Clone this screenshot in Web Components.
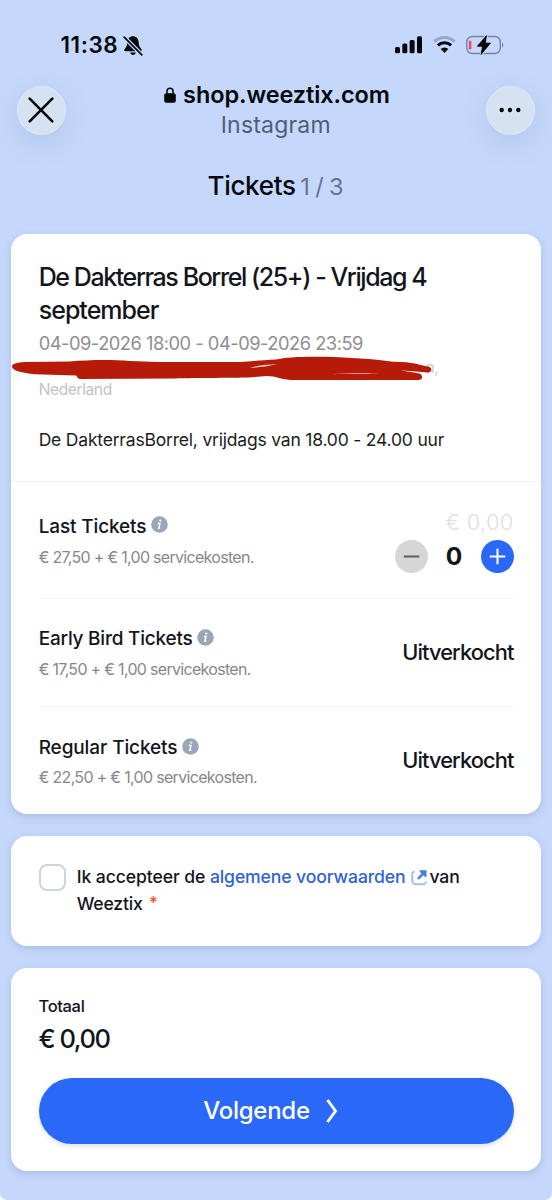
<!DOCTYPE html>
<html lang="nl">
<head>
<meta charset="utf-8">
<title>Tickets</title>
<style>
html{background:#fff}
body{margin:0;width:552px;height:1200px;overflow:hidden;font-family:Inter,"Liberation Sans",sans-serif;color:#13151c}
</style>
</head>
<body>
<ticket-shop></ticket-shop>
<script>
const define=(name,html,setup)=>{
  const tpl=document.createElement('template');
  tpl.innerHTML=html;
  customElements.define(name,class extends HTMLElement{
    connectedCallback(){
      if(this.shadowRoot)return;
      this.attachShadow({mode:'open'}).appendChild(tpl.content.cloneNode(true));
      if(setup)setup(this,this.shadowRoot);
    }
  });
};

define('text-line',`<style>:host{display:block;white-space:pre;flex:none}</style><slot></slot>`,el=>{
  for(const [a,p,u] of [['size','fontSize','px'],['lh','lineHeight','px'],['weight','fontWeight',''],['track','letterSpacing','px'],['color','color','']]){
    const v=el.getAttribute(a); if(v!==null)el.style[p]=v+u;
  }
});

define('status-bar',`<style>
:host{display:flex;align-items:center;height:70px;padding:10px 48px 0 60.500px;color:#05070c}
svg{display:block;flex:none}.sp{flex:1}
.bell{margin-left:4.500px}.wifi{margin:0 10px 0 11px}
</style>
<text-line size="22.500" weight="600" lh="30" track="0.58">11:38</text-line>
<svg class="bell" width="20" height="21" viewBox="0 0 20 21"><path d="M10 1.200c-3.300 0-5.400 2.400-5.600 5.600-.1 3.600-.9 5.200-2.700 7.200-.9 1-.4 2.300.9 2.300h14.800c1.300 0 1.800-1.300.9-2.300-1.800-2-2.600-3.600-2.700-7.200C15.400 3.600 13.300 1.200 10 1.200zM7.200 17.600h5.600c-.3 1.500-1.400 2.400-2.800 2.400s-2.500-.9-2.800-2.400z" fill="#05070c"/><path d="M2 3 18.200 19.200" stroke="#c5d8fb" stroke-width="4.200"/><path d="M1.200 2.200 18.800 19.800" stroke="#05070c" stroke-width="1.700" stroke-linecap="round"/></svg>
<span class="sp"></span>
<svg width="27" height="18" viewBox="0 0 27 18" fill="#05070c"><rect y="11" width="5" height="6.300" rx="1.500"/><rect x="7.300" y="7.600" width="5" height="9.700" rx="1.500"/><rect x="14.600" y="4" width="5" height="13.300" rx="1.500"/><rect x="22" y=".3" width="5" height="17" rx="1.500"/></svg>
<svg class="wifi" width="23" height="18" viewBox="0 0 23 18" fill="none"><path d="M1.400 5.700a14.500 14.500 0 0 1 20.200 0" stroke="#94a8cd" stroke-width="3"/><path d="M4.900 9.400a9.500 9.500 0 0 1 13.200 0" stroke="#05070c" stroke-width="3"/><path d="M11.500 17 7.700 13.100a5.500 5.500 0 0 1 7.600 0z" fill="#05070c"/></svg>
<svg width="38" height="20" viewBox="0 0 38 20"><rect x=".8" y="1.500" width="33.500" height="17" rx="5.500" fill="none" stroke="#7383a5" stroke-width="1.400"/><path d="M36 7.500c1.700.6 1.700 4.400 0 5z" fill="#7383a5"/><rect x="2.800" y="5.500" width="2.600" height="9" rx="1.200" fill="#f4495c"/><path d="M20.500.6 11.300 11.200h5.200L15 19.600l9.500-11.600h-5.200z" fill="#05070c" stroke="#c5d8fb" stroke-width="2.600" paint-order="stroke"/><path d="M20.500.6 11.300 11.200h5.200L15 19.600l9.500-11.600h-5.200z" fill="#05070c" stroke="#05070c" stroke-width=".6" stroke-linejoin="round"/></svg>`);

define('round-button',`<style>:host{display:grid;place-items:center;width:49px;height:49px;border-radius:50%;background:#d6e1f2;box-shadow:0 8px 28px rgba(70,100,160,.17),inset 0 0 1px 1px rgba(235,242,255,.35)}</style><slot></slot>`);

define('browser-nav',`<style>
:host{display:flex;justify-content:space-between;align-items:center;height:60px;padding:0 17px 0 16.500px;color:#05070c}
.site{display:flex;flex-direction:column;align-items:center}
.row{display:flex;align-items:center;gap:7.500px;margin-left:2px}svg{display:block}
</style>
<round-button><svg width="26" height="26" viewBox="0 0 26 26"><path d="M1.700 1.700 24.300 24.300M24.300 1.700 1.700 24.300" stroke="#05070c" stroke-width="2.600" stroke-linecap="round"/></svg></round-button>
<div class="site"><div class="row"><svg width="12" height="16" viewBox="0 0 12 16"><path d="M3 7V4.200a3 3 0 0 1 6 0V7" fill="none" stroke="#05070c" stroke-width="1.500"/><rect x=".2" y="6.200" width="11.600" height="9.500" rx="2" fill="#05070c"/></svg><text-line size="23.500" weight="600" lh="30" track="-0.09">shop.weeztix.com</text-line></div>
<text-line size="23" lh="30" track="0.19" color="#505d79">Instagram</text-line></div>
<round-button><svg width="22" height="6" viewBox="0 0 22 6" fill="#05070c"><circle cx="2.700" cy="3" r="2.200"/><circle cx="11" cy="3" r="2.200"/><circle cx="19.300" cy="3" r="2.200"/></svg></round-button>`);

define('step-title',`<style>:host{display:flex;justify-content:center;align-items:baseline;gap:4.500px;height:91px;line-height:91px;padding-right:1.500px;color:#05070c}</style>
<text-line size="26" weight="550" lh="91" track="-0.3">Tickets</text-line><text-line size="23.500" lh="91" track="-0.6" color="#65738e">1 / 3</text-line>`);

define('shop-card',`<style>:host{display:block;box-sizing:border-box;background:#fff;border-radius:16px;box-shadow:0 3px 9px rgba(60,85,150,.2)}</style><slot></slot>`);

define('event-info',`<style>
:host{display:block;position:relative;height:220px;padding:27.500px 27px 0 27.700px;border-bottom:1px solid #f1f2f4}
.addr{padding-left:387px}.space{height:1.500px}.gap{height:26.500px}
svg{position:absolute;left:0;top:118px;overflow:visible}
</style>
<text-line size="25" weight="540" lh="33" track="-1.42">De Dakterras Borrel (25+) - Vrijdag 4</text-line>
<text-line size="25" weight="540" lh="33" track="-0.98">september</text-line>
<div class="space"></div>
<text-line size="18.300" lh="28" track="-0.49" color="#8e8e91">04-09-2026 18:00 - 04-09-2026 23:59</text-line>
<text-line class="addr" size="15" lh="21" track="-0.2" color="#c8c8ca">n,</text-line>
<text-line size="15.500" lh="23" track="-0.37" color="#c2c2c5">Nederland</text-line>
<div class="gap"></div>
<text-line size="17.500" lh="26" track="-0.195" color="#1a1c22">De DakterrasBorrel, vrijdags van 18.00 - 24.00 uur</text-line>
<svg width="425" height="30" viewBox="11 351.500 425 30"><path d="M12 366C12 363.500 16 362 25 361.600L70 361C90 359.200 112 359 130 360.600L158 361.600 240 361.400C252 361 262 359.500 276 359 286 356.500 305 355.800 325 356.300 350 357 372 358.500 393 361.200 412 361 420 364.500 428 366 432.500 367 432.500 371.700 428 372L400 369.700 418 372.800C423.500 373.500 423.500 379.500 418 379.500H292C282 379.500 276 375.500 266 375.600 250 378 200 377 175 378L80 378.400C77 378 77.500 376 76 375L35 373.800C22 372.500 12 370 12 366Z" fill="#b51b08"/><path d="M250 367.400C258 364.500 268 364.300 278 363.600 268 366 260 367 250 367.400ZM330 373.800C350 372.200 368 372.300 380 373.100 365 373.500 350 373 330 373.800Z" fill="#f0c4ba"/></svg>`);

define('info-dot',`<style>:host{display:block}svg{display:block}</style><svg width="17" height="17" viewBox="0 0 17 17"><circle cx="8.500" cy="8.500" r="8.300" fill="#9ba7b9"/><path d="M7 7.400h1.900L7.900 12.200h1.300" fill="none" stroke="#fff" stroke-width="1.500"/><circle cx="9.300" cy="4.600" r="1.100" fill="#fff"/></svg>`);

define('ticket-row',`<style>
:host{display:flex;justify-content:space-between;box-sizing:border-box;height:108px;margin:0 27.500px 0 27.700px;padding-top:25px;border-bottom:1px solid #f5f5f6}
.name{display:flex;gap:4.500px}info-dot{margin-top:5px}
:host([first]){height:117px;padding-top:29.600px}:host([first]) info-dot{margin-top:4.400px}
:host([last]){border:0}
:host([last]) .name{padding-top:.6px;margin-bottom:-.6px}
</style><div><div class="name"><slot name="name"></slot><info-dot></info-dot></div><slot name="sub"></slot></div><slot></slot>`);

define('quantity-picker',`<style>
:host{display:flex;flex-direction:column;align-items:flex-end;margin-top:-2.600px}
.row{display:flex;align-items:center;margin-top:4px;height:33px}
svg{display:block}text-line{width:53px;text-align:center}
.p{width:auto}
</style>
<text-line class="p" size="22" weight="300" lh="27" track="0.2" color="#dfdfe1">€ 0,00</text-line>
<div class="row"><svg width="33" height="33" viewBox="0 0 33 33"><circle cx="16.500" cy="16.500" r="16.500" fill="#d6d6d6"/><path d="M8.800 16.500h15.600" stroke="#5c6066" stroke-width="2"/></svg>
<text-line size="24.500" weight="700" lh="33">0</text-line>
<svg width="33" height="33" viewBox="0 0 33 33"><circle cx="16.500" cy="16.500" r="16.500" fill="#2a68f7"/><path d="M8.700 16.500h15.600M16.500 8.700v15.600" stroke="#fff" stroke-width="2"/></svg></div>`);

define('sold-out',`<style>:host{display:block;margin-top:12.500px}</style><text-line size="21.800" weight="500" lh="30" track="-0.89">Uitverkocht</text-line>`);

define('terms-check',`<style>
:host{display:flex;gap:10px;padding:27.700px 0 0 27.500px}
.box{width:27.500px;height:27.500px;box-sizing:border-box;border:2px solid #cfd3da;border-radius:8px}
.txt{padding-left:.8px;margin-top:-.7px}.l{display:flex;height:27.300px}svg{display:block;margin:6px 2px 0 5px}
.req{margin-left:6.500px}
</style><div class="box"></div><div class="txt">
<div class="l"><text-line size="17.600" weight="500" lh="27.300" track="-0.1">Ik accepteer de </text-line><text-line size="17.600" weight="500" lh="27.300" track="-0.12" color="#2f62d9">algemene voorwaarden</text-line>
<svg width="17" height="17" viewBox="0 0 17 17" fill="none"><path d="M3.500 2.500C2 3 1.200 4 1.200 5.500V11C1.200 13.500 2.800 15.300 5.300 15.300H11.500C13.500 15.300 14.800 14.300 15 12.700" stroke="#a4c0f0" stroke-width="2"/><path d="M7 9.800 13.800 3" stroke="#4a82db" stroke-width="2.600"/><path d="M8.300 1.300H15.500V8.500L13 7 9.500 3.500Z" fill="#4a7fd6"/></svg>
<text-line size="17.600" weight="500" lh="27.300" track="-0.2">van</text-line></div>
<div class="l"><text-line size="17.600" weight="500" lh="27.300" track="-0.2">Weeztix</text-line><text-line class="req" size="17" weight="500" lh="27.300" color="#e2562b">*</text-line></div></div>`);

define('order-total',`<style>
:host{display:block;padding:25px 27.500px 0}
.btn{display:flex;align-items:center;justify-content:center;box-sizing:border-box;height:65.500px;border-radius:33px;margin-top:19.500px;padding-right:11px;background:#2a68f7;box-shadow:0 2px 5px rgba(40,80,160,.18);color:#fff;gap:16px}
svg{display:block}
</style>
<text-line size="16.500" lh="26" track="-0.35" weight="450">Totaal</text-line>
<text-line size="25.500" lh="40" track="-1.45" weight="450">€ 0,00</text-line>
<div class="btn"><text-line size="24" weight="500" lh="33" track="-0.25">Volgende</text-line><svg width="12" height="24" viewBox="0 0 12 24"><path d="M1.500 1 9.500 12 1.500 23" fill="none" stroke="#fff" stroke-width="2.900"/></svg></div>`);

define('ticket-shop',`<style>
:host{display:block;box-sizing:border-box;height:1200px;background:#c5d8fb;border-radius:0 0 7px 7px;overflow:hidden}
main{display:flex;flex-direction:column;gap:22px;padding:2.500px 11px 0}
.a{height:580.500px}.b{height:109.500px}.c{height:203.500px}
</style>
<status-bar></status-bar><browser-nav></browser-nav><step-title></step-title>
<main>
<shop-card class="a"><event-info></event-info>
<ticket-row first><text-line slot="name" size="19" weight="500" lh="30" track="-0.15">Last Tickets</text-line><text-line slot="sub" size="16" lh="30" track="-0.7" color="#87878b">€ 27,50 + € 1,00 servicekosten.</text-line><quantity-picker></quantity-picker></ticket-row>
<ticket-row><text-line slot="name" size="19" weight="500" lh="30" track="-0.23">Early Bird Tickets</text-line><text-line slot="sub" size="16" lh="31" track="-0.69" color="#87878b">€ 17,50 + € 1,00 servicekosten.</text-line><sold-out></sold-out></ticket-row>
<ticket-row last><text-line slot="name" size="19" weight="500" lh="30" track="-0.12">Regular Tickets</text-line><text-line slot="sub" size="16" lh="31" track="-0.68" color="#87878b">€ 22,50 + € 1,00 servicekosten.</text-line><sold-out></sold-out></ticket-row>
</shop-card>
<shop-card class="b"><terms-check></terms-check></shop-card>
<shop-card class="c"><order-total></order-total></shop-card>
</main>`);
</script>
</body>
</html>
